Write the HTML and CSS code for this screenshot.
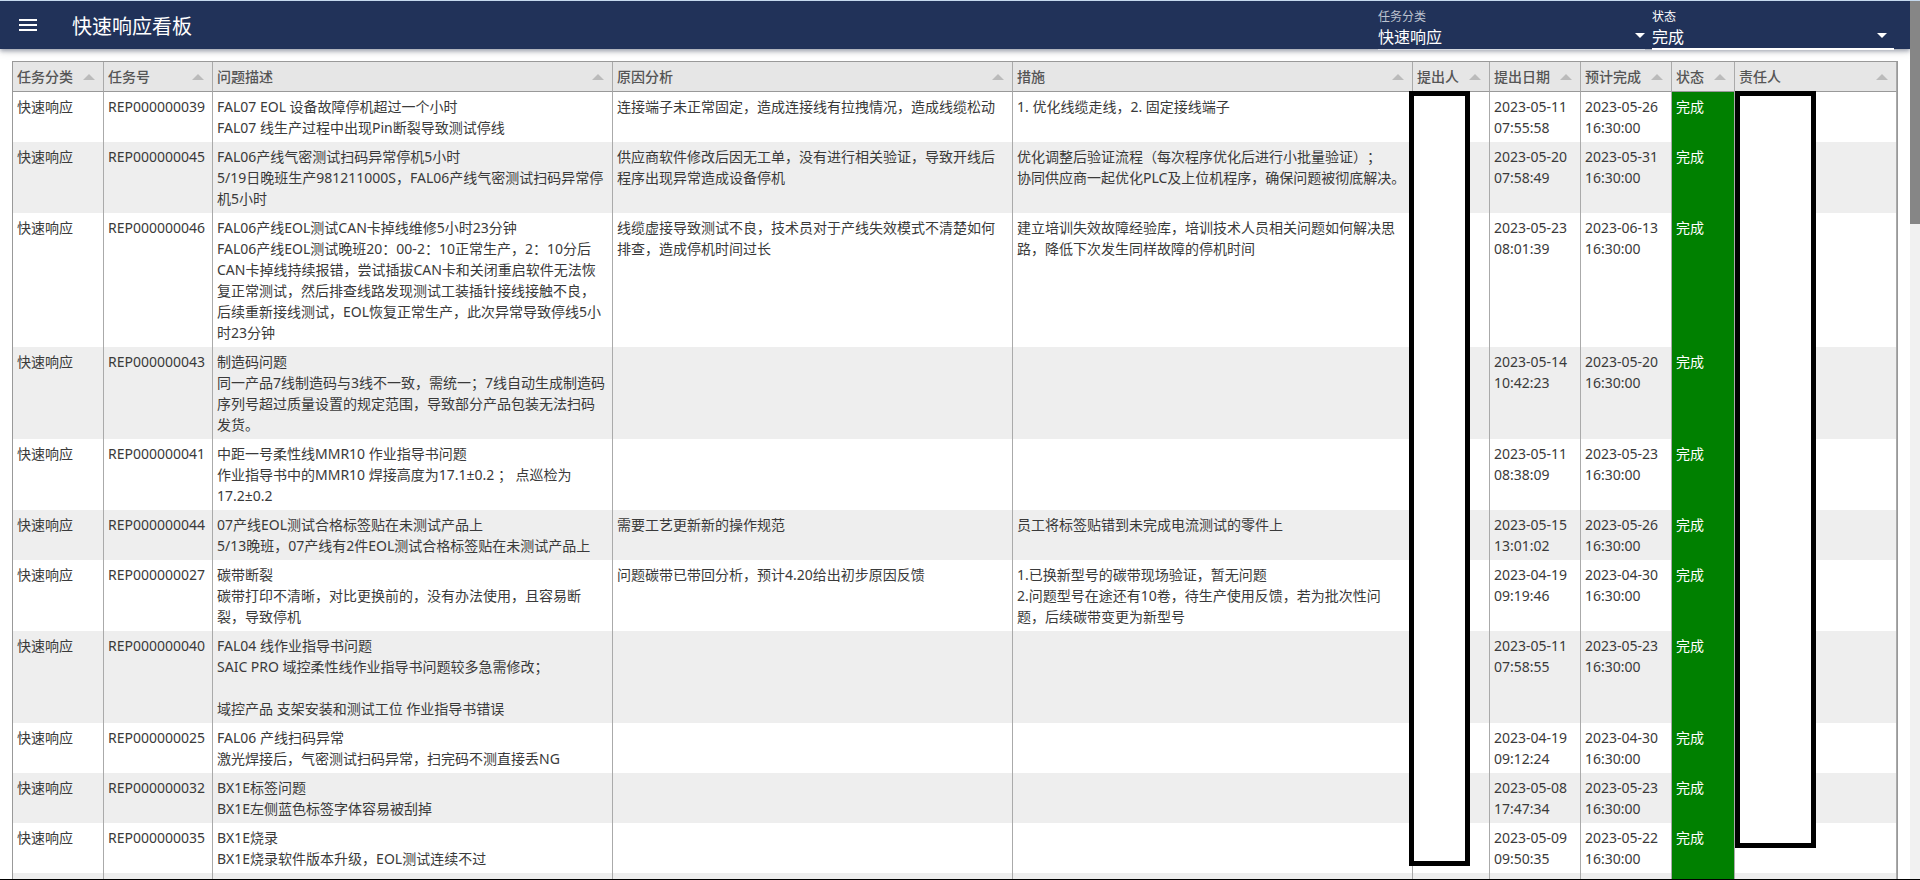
FILE: index.html
```html
<!DOCTYPE html>
<html lang="zh-CN">
<head>
<meta charset="utf-8">
<title>快速响应看板</title>
<link rel="stylesheet" href="styles.css">
</head>
<body>
<div class="page">
<header class="bar">
<button class="menu" type="button" aria-label="菜单"><svg viewBox="0 0 24 24" width="24" height="24"><path fill="currentColor" d="M3 18h18v-2H3v2zm0-5h18v-2H3v2zm0-7v2h18V6H3z"/></svg></button>
<h1 class="title">快速响应看板</h1>
<div class="filters">
<div class="field">
<label class="field-label" for="category">任务分类</label>
<select class="field-select" id="category"><option>快速响应</option></select>
<svg class="caret" viewBox="0 0 10 5" width="10" height="5"><path fill="currentColor" d="M0 0h10L5 5z"/></svg>
</div>
<div class="field field-active">
<label class="field-label" for="status">状态</label>
<select class="field-select" id="status"><option>完成</option></select>
<svg class="caret" viewBox="0 0 10 5" width="10" height="5"><path fill="currentColor" d="M0 0h10L5 5z"/></svg>
</div>
</div>
</header>
<main class="content">
<div class="grid">
<table class="tasks">
<colgroup><col class="w-category"><col class="w-number"><col class="w-text"><col class="w-text"><col class="w-text"><col class="w-person"><col class="w-date"><col class="w-date"><col class="w-status"><col></colgroup>
<thead><tr>
<th><div class="head">任务分类<i class="sort"></i></div></th><th><div class="head">任务号<i class="sort"></i></div></th><th><div class="head">问题描述<i class="sort"></i></div></th><th><div class="head">原因分析<i class="sort"></i></div></th><th><div class="head">措施<i class="sort"></i></div></th><th><div class="head">提出人<i class="sort"></i></div></th><th><div class="head">提出日期<i class="sort"></i></div></th><th><div class="head">预计完成<i class="sort"></i></div></th><th><div class="head">状态<i class="sort"></i></div></th><th><div class="head">责任人<i class="sort"></i></div></th>
</tr></thead>
<tbody>
<tr><td>快速响应</td><td>REP000000039</td><td>FAL07 EOL 设备故障停机超过一个小时
FAL07 线生产过程中出现Pin断裂导致测试停线</td><td>连接端子未正常固定，造成连接线有拉拽情况，造成线缆松动</td><td>1. 优化线缆走线，2. 固定接线端子</td><td></td><td>2023-05-11 07:55:58</td><td>2023-05-26 16:30:00</td><td class="done">完成</td><td></td></tr>
<tr><td>快速响应</td><td>REP000000045</td><td>FAL06产线气密测试扫码异常停机5小时
5/19日晚班生产981211000S，FAL06产线气密测试扫码异常停机5小时</td><td>供应商软件修改后因无工单，没有进行相关验证，导致开线后程序出现异常造成设备停机</td><td>优化调整后验证流程（每次程序优化后进行小批量验证）；
协同供应商一起优化PLC及上位机程序，确保问题被彻底解决。</td><td></td><td>2023-05-20 07:58:49</td><td>2023-05-31 16:30:00</td><td class="done">完成</td><td></td></tr>
<tr><td>快速响应</td><td>REP000000046</td><td>FAL06产线EOL测试CAN卡掉线维修5小时23分钟
FAL06产线EOL测试晚班20：00-2：10正常生产，2：10分后CAN卡掉线持续报错，尝试插拔CAN卡和关闭重启软件无法恢复正常测试，然后排查线路发现测试工装插针接线接触不良，后续重新接线测试，EOL恢复正常生产，此次异常导致停线5小时23分钟</td><td>线缆虚接导致测试不良，技术员对于产线失效模式不清楚如何排查，造成停机时间过长</td><td>建立培训失效故障经验库，培训技术人员相关问题如何解决思路，降低下次发生同样故障的停机时间</td><td></td><td>2023-05-23 08:01:39</td><td>2023-06-13 16:30:00</td><td class="done">完成</td><td></td></tr>
<tr><td>快速响应</td><td>REP000000043</td><td>制造码问题
同一产品7线制造码与3线不一致，需统一；7线自动生成制造码序列号超过质量设置的规定范围，导致部分产品包装无法扫码发货。</td><td></td><td></td><td></td><td>2023-05-14 10:42:23</td><td>2023-05-20 16:30:00</td><td class="done">完成</td><td></td></tr>
<tr><td>快速响应</td><td>REP000000041</td><td>中距一号柔性线MMR10 作业指导书问题
作业指导书中的MMR10 焊接高度为17.1±0.2 ； 点巡检为17.2±0.2</td><td></td><td></td><td></td><td>2023-05-11 08:38:09</td><td>2023-05-23 16:30:00</td><td class="done">完成</td><td></td></tr>
<tr><td>快速响应</td><td>REP000000044</td><td>07产线EOL测试合格标签贴在未测试产品上
5/13晚班，07产线有2件EOL测试合格标签贴在未测试产品上</td><td>需要工艺更新新的操作规范</td><td>员工将标签贴错到未完成电流测试的零件上</td><td></td><td>2023-05-15 13:01:02</td><td>2023-05-26 16:30:00</td><td class="done">完成</td><td></td></tr>
<tr><td>快速响应</td><td>REP000000027</td><td>碳带断裂
碳带打印不清晰，对比更换前的，没有办法使用，且容易断裂，导致停机</td><td>问题碳带已带回分析，预计4.20给出初步原因反馈</td><td>1.已换新型号的碳带现场验证，暂无问题
2.问题型号在途还有10卷，待生产使用反馈，若为批次性问题，后续碳带变更为新型号</td><td></td><td>2023-04-19 09:19:46</td><td>2023-04-30 16:30:00</td><td class="done">完成</td><td></td></tr>
<tr><td>快速响应</td><td>REP000000040</td><td>FAL04 线作业指导书问题
SAIC PRO 域控柔性线作业指导书问题较多急需修改；

域控产品 支架安装和测试工位 作业指导书错误</td><td></td><td></td><td></td><td>2023-05-11 07:58:55</td><td>2023-05-23 16:30:00</td><td class="done">完成</td><td></td></tr>
<tr><td>快速响应</td><td>REP000000025</td><td>FAL06 产线扫码异常
激光焊接后，气密测试扫码异常，扫完码不测直接丢NG</td><td></td><td></td><td></td><td>2023-04-19 09:12:24</td><td>2023-04-30 16:30:00</td><td class="done">完成</td><td></td></tr>
<tr><td>快速响应</td><td>REP000000032</td><td>BX1E标签问题
BX1E左侧蓝色标签字体容易被刮掉</td><td></td><td></td><td></td><td>2023-05-08 17:47:34</td><td>2023-05-23 16:30:00</td><td class="done">完成</td><td></td></tr>
<tr><td>快速响应</td><td>REP000000035</td><td>BX1E烧录
BX1E烧录软件版本升级，EOL测试连续不过</td><td></td><td></td><td></td><td>2023-05-09 09:50:35</td><td>2023-05-22 16:30:00</td><td class="done">完成</td><td></td></tr>
<tr class="next"><td></td><td></td><td></td><td></td><td></td><td></td><td></td><td></td><td class="done"></td><td></td></tr>
</tbody>
</table>
<div class="mask mask-proposer"></div>
<div class="mask mask-owner"></div>
</div>
</main>
</div>
<div class="scrollbar"><div class="thumb"></div></div>
</body>
</html>
```
FILE: styles.css
```css
* { box-sizing: border-box; }
body {
  margin: 0;
  height: 100vh;
  display: flex;
  overflow: hidden;
  border-top: 1px solid #c5d9ee;
  border-bottom: 1px solid #000;
  background: #fff;
  color: #3a3a3a;
  font: 14px/21px "Noto Sans", "Noto Sans CJK SC", sans-serif;
  text-spacing-trim: space-all;
}
.page { flex: 1; min-width: 0; display: flex; flex-direction: column; }
.bar {
  height: 48px;
  flex: none;
  display: flex;
  align-items: center;
  padding: 0 16px;
  background: #213259;
  color: #fff;
  box-shadow: 0 2px 4px rgba(20, 35, 70, .35), 0 3px 8px rgba(0, 0, 0, .12);
}
.menu { display: flex; padding: 0; border: 0; background: none; color: inherit; }
.title { margin: 0 0 0 32px; padding-top: 3px; font-size: 20px; font-weight: 400; line-height: 28px; }
.filters { display: flex; gap: 7px; margin-left: auto; align-self: stretch; }
.field { position: relative; display: flex; flex-direction: column; width: 267px; padding-top: 8px; }
.field::after { content: ""; position: absolute; left: 0; right: 0; bottom: -1px; height: 1px; background: #d5d9e0; }
.field-active { width: 242px; }
.field-active::after { height: 2px; background: #fff; }
.field-label { font-size: 12px; line-height: 16px; color: #bcc2cf; }
.field-active .field-label { color: #fff; }
.field-select {
  appearance: none;
  width: 100%;
  padding: 0;
  border: 0;
  background: none;
  color: inherit;
  font: inherit;
  font-size: 16px;
  line-height: 24px;
}
.field-select option { color: #333; }
.caret { position: absolute; right: 0; top: 32px; }
.field-active .caret { right: 7px; }
.content { flex: 1; min-height: 0; padding: 12px 12px 0; overflow: hidden; }
.grid { position: relative; border: 1px solid #999; }
.tasks { width: 100%; table-layout: fixed; border-collapse: separate; border-spacing: 0; }
.w-category, .w-date { width: 91px; }
.w-number { width: 109px; }
.w-text { width: 400px; }
.w-person { width: 77px; }
.w-status { width: 63px; }
.tasks th {
  padding: 4px;
  border-right: 1px solid #aaa;
  border-bottom: 1px solid #999;
  background: #e6e6e6;
  color: #555;
  font-weight: 500;
  text-align: left;
}
.head { display: flex; align-items: center; justify-content: space-between; padding-right: 4px; white-space: nowrap; }
.sort { border: 6px solid transparent; border-top: 0; border-bottom-color: #bbb; }
.tasks td { padding: 4px; border-right: 1px solid #aaa; vertical-align: top; white-space: pre-line; }
.tasks tbody tr:nth-child(even) { background: #eee; }
.tasks .done { background: #008000; color: #fff; }
.next { height: 50px; }
.mask { position: absolute; top: 29px; border: 5px solid #000; background: #fff; }
.mask-proposer { left: 1396px; width: 61px; height: 775px; }
.mask-owner { right: 81px; width: 81px; height: 757px; }
.scrollbar { flex: none; width: 10px; background: #f1f1f1; }
.thumb { height: 223px; background: #868686; }
```
